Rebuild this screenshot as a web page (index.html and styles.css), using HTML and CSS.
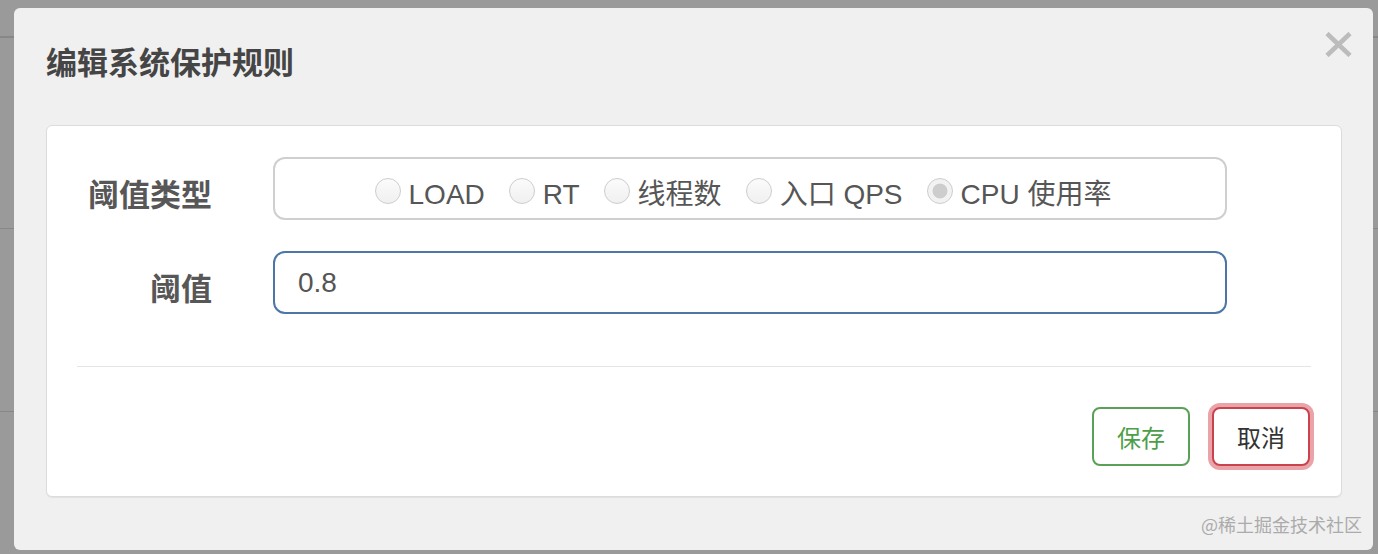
FILE: index.html
```html
<!DOCTYPE html>
<html lang="zh-CN">
<head>
<meta charset="utf-8">
<title>编辑系统保护规则</title>
<link rel="stylesheet" href="styles.css">
</head>
<body>
<div class="backdrop">
  <div class="bg-row bg-row-1"></div>
  <div class="bg-row bg-row-2"></div>
  <div class="bg-row bg-row-3"></div>
</div>
<div class="modal">
  <div class="modal-header">
    <h4 class="modal-title">编辑系统保护规则</h4>
    <button class="close" type="button" aria-label="关闭">
      <svg width="27" height="25" viewBox="0 0 27 25"><path d="M2 1.5 L25 23.5 M25 1.5 L2 23.5" stroke="#bcbcbc" stroke-width="4.6" fill="none"/></svg>
    </button>
  </div>
  <div class="panel">
    <div class="form-row">
      <label class="form-label">阈值类型</label>
      <div class="radio-box">
        <span class="radio-item"><span class="radio"></span><span class="radio-text">LOAD</span></span>
        <span class="radio-item"><span class="radio"></span><span class="radio-text">RT</span></span>
        <span class="radio-item"><span class="radio"></span><span class="radio-text">线程数</span></span>
        <span class="radio-item"><span class="radio"></span><span class="radio-text">入口 QPS</span></span>
        <span class="radio-item"><span class="radio radio-checked"></span><span class="radio-text">CPU 使用率</span></span>
      </div>
    </div>
    <div class="form-row">
      <label class="form-label">阈值</label>
      <input class="text-input" type="text" value="0.8">
    </div>
    <div class="divider"></div>
    <div class="footer">
      <button class="btn btn-save" type="button">保存</button>
      <button class="btn btn-cancel" type="button">取消</button>
    </div>
  </div>
  <div class="watermark">@稀土掘金技术社区</div>
</div>
</body>
</html>
```

FILE: styles.css
```css
* { box-sizing: border-box; }
html, body { margin: 0; padding: 0; }
body {
  width: 1378px;
  height: 554px;
  overflow: hidden;
  background: #9a9a9a;
  font-family: "Liberation Sans", "Noto Sans CJK SC", sans-serif;
  position: relative;
}
.backdrop { width: 100%; }
.bg-row { border-bottom: 1px solid #878787; }
.bg-row-1 { height: 38px; border-bottom-width: 2px; }
.bg-row-2 { height: 191px; }
.bg-row-3 { height: 183px; }

.modal {
  position: absolute;
  left: 14px;
  top: 8px;
  width: 1359px;
  height: 542px;
  background: #f0f0f0;
  border-radius: 6px;
}
.modal-header {
  height: 117px;
  padding: 35px 21px 0 32px;
  display: flex;
  justify-content: space-between;
  align-items: flex-start;
}
.modal-title {
  margin: 0;
  font-family: "Noto Sans CJK SC", sans-serif;
  font-size: 31px;
  line-height: 36px;
  font-weight: 700;
  color: #454545;
}
.close {
  margin-top: -11px;
  padding: 0;
  border: 0;
  background: transparent;
  width: 27px;
  height: 25px;
  display: block;
}
.close svg { display: block; }

.panel {
  margin: 0 31px 0 32px;
  height: 372px;
  background: #fff;
  border: 1px solid #dcdcdc;
  border-radius: 6px;
  padding: 31px 30px 0;
  box-shadow: 0 1px 1px rgba(0,0,0,0.06);
}
.form-row {
  display: flex;
  align-items: stretch;
  height: 63px;
}
.form-row + .form-row { margin-top: 31px; }
.form-label {
  width: 135px;
  margin-right: 61px;
  display: flex;
  justify-content: flex-end;
  align-items: center;
  padding-top: 8px;
  font-family: "Noto Sans CJK SC", sans-serif;
  font-size: 31px;
  font-weight: 700;
  color: #575757;
  white-space: nowrap;
}
.radio-box {
  width: 954px;
  height: 63px;
  border: 2px solid #cfcfcf;
  border-radius: 12px;
  display: flex;
  justify-content: center;
  align-items: center;
  gap: 24px;
  padding: 12px 14px 0 0;
}
.radio-item {
  display: flex;
  align-items: center;
  gap: 8px;
}
.radio {
  width: 26px;
  height: 26px;
  border-radius: 50%;
  border: 1.5px solid #cdcdcd;
  background: linear-gradient(#fbfbfb, #f0f0f0);
  margin-bottom: 8px;
  flex: none;
}
.radio-checked {
  background: radial-gradient(circle, #cdcdcd 0 7px, #f2f2f2 7.8px);
}
.radio-text {
  font-size: 28px;
  color: #565656;
  white-space: nowrap;
  line-height: 32px;
}
.text-input {
  width: 954px;
  height: 63px;
  border: 2px solid #4b76a6;
  border-radius: 12px;
  padding: 0 0 0 23px;
  font-family: "Liberation Sans", sans-serif;
  font-size: 28px;
  color: #555;
  background: #fff;
  outline: none;
}
.divider {
  margin-top: 52px;
  height: 1px;
  background: #e5e5e5;
}
.footer {
  margin-top: 40px;
  display: flex;
  justify-content: flex-end;
  gap: 22px;
  padding-right: 1px;
}
.btn {
  width: 98px;
  height: 59px;
  border: 2px solid;
  border-radius: 8px;
  background: #fff;
  font-family: "Noto Sans CJK SC", sans-serif;
  font-size: 24px;
  padding: 0;
}
.btn-save {
  border-color: #5aa057;
  color: #4d9e49;
}
.btn-cancel {
  border-color: #c9434f;
  color: #333;
  box-shadow: 0 0 0 4px #eaa3a8;
}
.watermark {
  position: absolute;
  right: 11px;
  bottom: 14px;
  font-family: "Noto Sans CJK SC", sans-serif;
  font-size: 18px;
  line-height: 24px;
  color: #ababab;
}
```
